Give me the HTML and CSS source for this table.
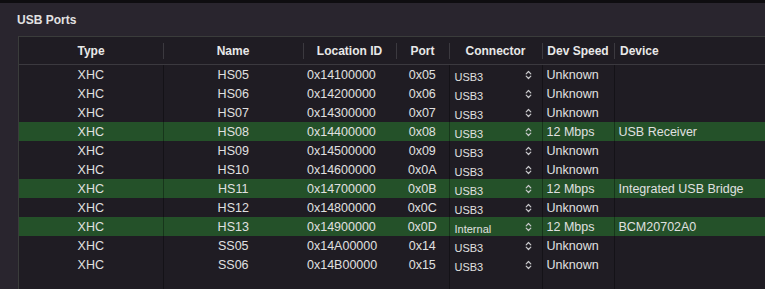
FILE: index.html
```html
<!DOCTYPE html>
<html lang="en">
<head>
    <meta charset="UTF-8">
    <title>USB Ports</title>
    <link rel="stylesheet" href="styles.css">
</head>
<body>
    <div class="topBar"></div>
    <div class="panel">
        <h2 class="panelTitle">USB Ports</h2>
        <div class="tableFrame">
            <table class="portTable">
                <colgroup>
                    <col class="colType">
                    <col class="colName">
                    <col class="colLocation">
                    <col class="colPort">
                    <col class="colConnector">
                    <col class="colSpeed">
                    <col class="colDevice">
                </colgroup>
                <thead>
                    <tr>
                        <th>Type</th>
                        <th class="sep">Name</th>
                        <th class="sep">Location ID</th>
                        <th class="sep">Port</th>
                        <th class="sep">Connector</th>
                        <th class="sep">Dev Speed</th>
                        <th class="sep left">Device</th>
                    </tr>
                </thead>
                <tbody id="portRows"></tbody>
            </table>
        </div>
    </div>

<script>
  document.addEventListener("DOMContentLoaded", function() {
    const ports = [
        ["XHC", "HS05", "0x14100000", "0x05", "USB3", "Unknown", ""],
        ["XHC", "HS06", "0x14200000", "0x06", "USB3", "Unknown", ""],
        ["XHC", "HS07", "0x14300000", "0x07", "USB3", "Unknown", ""],
        ["XHC", "HS08", "0x14400000", "0x08", "USB3", "12 Mbps", "USB Receiver"],
        ["XHC", "HS09", "0x14500000", "0x09", "USB3", "Unknown", ""],
        ["XHC", "HS10", "0x14600000", "0x0A", "USB3", "Unknown", ""],
        ["XHC", "HS11", "0x14700000", "0x0B", "USB3", "12 Mbps", "Integrated USB Bridge"],
        ["XHC", "HS12", "0x14800000", "0x0C", "USB3", "Unknown", ""],
        ["XHC", "HS13", "0x14900000", "0x0D", "Internal", "12 Mbps", "BCM20702A0"],
        ["XHC", "SS05", "0x14A00000", "0x14", "USB3", "Unknown", ""],
        ["XHC", "SS06", "0x14B00000", "0x15", "USB3", "Unknown", ""]
    ];

    const chevron = '<svg class="chevron" width="7" height="10" viewBox="0 0 7 10">' +
        '<path d="M1.2 3.8 L3.5 1.5 L5.8 3.8 M1.2 6.2 L3.5 8.5 L5.8 6.2" fill="none" stroke="#c9c9cc" stroke-width="1.2" stroke-linecap="round" stroke-linejoin="round"/></svg>';

    const rows = document.getElementById("portRows");

    ports.forEach(function(p) {
        const tr = document.createElement("tr");
        // a connected device gets the green highlight
        if (p[6] !== "") {
            tr.className = "active";
        }
        tr.innerHTML =
            '<td class="center">' + p[0] + '</td>' +
            '<td class="center line">' + p[1] + '</td>' +
            '<td>' + p[2] + '</td>' +
            '<td class="center">' + p[3] + '</td>' +
            '<td class="line"><span class="popup"><span class="popupText">' + p[4] + '</span>' + chevron + '</span></td>' +
            '<td class="line">' + p[5] + '</td>' +
            '<td class="line">' + p[6] + '</td>';
        rows.appendChild(tr);
    });

    // empty filler so the column lines run to the bottom
    const filler = document.createElement("tr");
    filler.className = "filler";
    filler.innerHTML = '<td></td><td class="line"></td><td></td><td></td><td class="line"></td><td class="line"></td><td class="line"></td>';
    rows.appendChild(filler);
  });
</script>
</body>
</html>
```

FILE: styles.css
```css
body {
    background-color: #29252e;
    font-family: "Liberation Sans", Arial, sans-serif;
    color: #e0e0e0;
    margin: 0;
    padding: 0;
    overflow: hidden;
}

.topBar {
    height: 3px;
    background: #0e0d10;
}

.panelTitle {
    margin: 0;
    padding: 10px 17px 9px;
    font-size: 12px;
    line-height: 14px;
    font-weight: bold;
    color: #e2e2e2;
}

.tableFrame {
    margin-left: 18px;
    border: 1px solid #3a3c3b;
    border-right: none;
    border-bottom: none;
    background: #1f1c23;
}

.portTable {
    width: 100%;
    table-layout: fixed;
    border-collapse: collapse;
    border-spacing: 0;
}

.colType { width: 144px; }
.colName { width: 140px; }
.colLocation { width: 93px; }
.colPort { width: 53px; }
.colConnector { width: 93px; }
.colSpeed { width: 72px; }

th {
    position: relative;
    height: 27px;
    padding: 0;
    font-size: 12px;
    font-weight: bold;
    color: #e8e8e8;
    text-align: center;
    border-bottom: 1px solid #3b393f;
}

th.left {
    text-align: left;
    padding-left: 6px;
}

th.sep::before {
    content: "";
    position: absolute;
    left: 0;
    top: 6px;
    height: 16px;
    border-left: 1px solid #3b393f;
}

td {
    height: 19px;
    padding: 1px 0 0 4px;
    font-size: 12.5px;
    line-height: 18px;
    white-space: nowrap;
    overflow: hidden;
    box-sizing: border-box;
}

td.center {
    text-align: center;
    padding-left: 0;
}

td.line {
    border-left: 1px solid #141217;
}

tr.active td {
    background: #245129;
}

tr.active td.line {
    border-left-color: #17361b;
}

.popup {
    display: flex;
    align-items: center;
    justify-content: space-between;
    padding-right: 10px;
    padding-left: 1px;
}

.popupText {
    font-size: 11px;
    position: relative;
    top: 2px;
}

.chevron {
    display: block;
}

tr.filler td {
    height: 15px;
}
```
